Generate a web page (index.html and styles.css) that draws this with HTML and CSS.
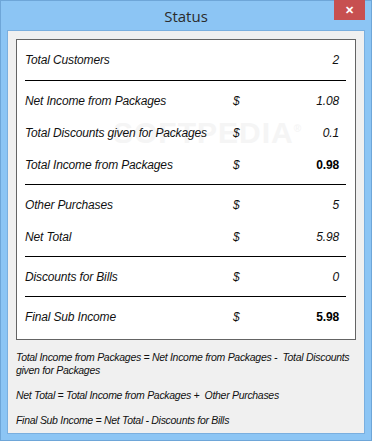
FILE: index.html
```html
<!DOCTYPE html>
<html lang="en">
  <head>
    <meta charset="UTF-8" />
    <title>Status</title>
    <link rel="stylesheet" href="styles.css">
  </head>
  <body>
    <div class="window">
      <div class="titlebar">
        <span class="title">Status</span>
        <span class="close">&#x2715;</span>
      </div>
      <div class="client">
        <div class="box">
          <div class="watermark">SOFTPEDIA<sup>&reg;</sup></div>
          <div class="section first">
            <div class="row"><span>Total Customers</span><span></span><span class="val">2</span></div>
          </div>
          <div class="section">
            <div class="row"><span>Net Income from Packages</span><span class="cur">$</span><span class="val">1.08</span></div>
            <div class="row"><span>Total Discounts given for Packages</span><span class="cur">$</span><span class="val">0.1</span></div>
            <div class="row"><span>Total Income from Packages</span><span class="cur">$</span><span class="val bold">0.98</span></div>
          </div>
          <div class="section">
            <div class="row"><span>Other Purchases</span><span class="cur">$</span><span class="val">5</span></div>
            <div class="row"><span>Net Total</span><span class="cur">$</span><span class="val">5.98</span></div>
          </div>
          <div class="section">
            <div class="row"><span>Discounts for Bills</span><span class="cur">$</span><span class="val">0</span></div>
          </div>
          <div class="section last">
            <div class="row"><span>Final Sub Income</span><span class="cur">$</span><span class="val bold">5.98</span></div>
          </div>
        </div>
        <p class="formula">Total Income from Packages = Net Income from Packages -&nbsp; Total Discounts given for Packages</p>
        <p class="formula">Net Total = Total Income from Packages +&nbsp; Other Purchases</p>
        <p class="formula">Final Sub Income = Net Total - Discounts for Bills</p>
      </div>
    </div>
  </body>
</html>
```

FILE: styles.css
```css
body {
  margin: 0;
  font-family: "Liberation Sans", Arial, sans-serif;
}
.window {
  box-sizing: border-box;
  width: 372px;
  height: 441px;
  background: #8cc5f4;
  border: 1px solid #6ea6d8;
  padding: 0 6px 6px;
  display: flex;
  flex-direction: column;
}
.titlebar {
  position: relative;
  flex-shrink: 0;
  height: 29px;
  display: flex;
  align-items: center;
  justify-content: center;
}
.title {
  font-family: "Open Sans", sans-serif;
  font-size: 15px;
  color: #2b2b2b;
}
.close {
  position: absolute;
  right: 0;
  top: -1px;
  width: 31px;
  height: 20px;
  background: #c75050;
  color: white;
  font-size: 11px;
  font-weight: bold;
  display: flex;
  align-items: center;
  justify-content: center;
}
.client {
  flex: 1;
  min-height: 0;
  background: #f0f0f0;
  border: 1px solid #7aafdf;
  padding: 8px;
}
.box {
  position: relative;
  height: 299px;
  background: white;
  border: 1px solid #646464;
  padding: 0 9px 0 8px;
  overflow: hidden;
}
.section {
  position: relative;
  padding: 4px 0 3px;
  border-bottom: 1px solid #000;
}
.section.first {
  padding-bottom: 4px;
}
.section.last {
  border-bottom: none;
}
.row {
  display: grid;
  grid-template-columns: 1fr 20px 93px;
  align-items: center;
  height: 32px;
  font-size: 12px;
  font-style: italic;
  letter-spacing: -0.15px;
  color: #111;
}
.cur {
  text-align: left;
}
.val {
  text-align: right;
  padding-right: 7px;
}
.bold {
  font-weight: bold;
  font-style: normal;
  color: #000;
}
.watermark {
  position: absolute;
  left: 96px;
  top: 76px;
  font-size: 30px;
  font-weight: bold;
  letter-spacing: 1px;
  color: #f5f5f5;
}
.watermark sup {
  font-size: 10px;
}
.formula {
  margin: 11px 0 12px;
  font-size: 10.5px;
  font-style: italic;
  letter-spacing: -0.3px;
  line-height: 13px;
  color: #111;
}
```
